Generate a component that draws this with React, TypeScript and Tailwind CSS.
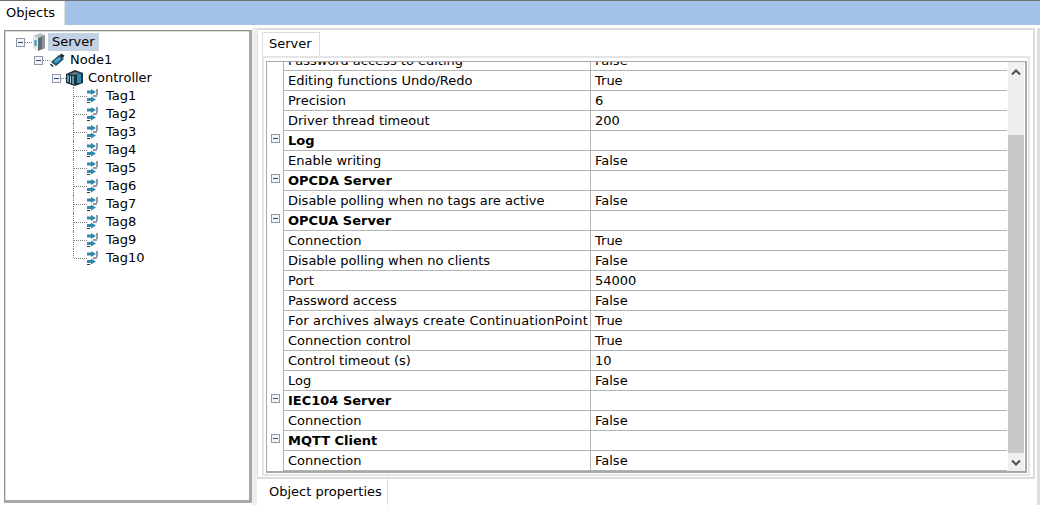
import React from "react";

const font = { fontFamily: "'DejaVu Sans', Verdana, sans-serif" };

type Row = { label: string; value?: string; head?: boolean; wide?: boolean };

const ROWS: Row[] = [
  { label: "Password access to editing", value: "False" },
  { label: "Editing functions Undo/Redo", value: "True" },
  { label: "Precision", value: "6" },
  { label: "Driver thread timeout", value: "200" },
  { label: "Log", head: true },
  { label: "Enable writing", value: "False" },
  { label: "OPCDA Server", head: true },
  { label: "Disable polling when no tags are active", value: "False" },
  { label: "OPCUA Server", head: true },
  { label: "Connection", value: "True" },
  { label: "Disable polling when no clients", value: "False" },
  { label: "Port", value: "54000" },
  { label: "Password access", value: "False" },
  { label: "For archives always create ContinuationPoint", value: "True", wide: true },
  { label: "Connection control", value: "True" },
  { label: "Control timeout (s)", value: "10" },
  { label: "Log", value: "False" },
  { label: "IEC104 Server", head: true },
  { label: "Connection", value: "False" },
  { label: "MQTT Client", head: true },
  { label: "Connection", value: "False" },
];

const TAGS = ["Tag1", "Tag2", "Tag3", "Tag4", "Tag5", "Tag6", "Tag7", "Tag8", "Tag9", "Tag10"];

function Minus() {
  return (
    <span className="flex h-[9px] w-[9px] shrink-0 items-center justify-center border border-[#8f9aa8] bg-[#f2f4f7]">
      <span className="h-px w-[5px] bg-[#2c4a80]" />
    </span>
  );
}

function ServerIcon() {
  return (
    <svg width="14" height="18" viewBox="0 0 14 18" className="shrink-0">
      <path d="M1 3 L8 0 L13 2 L6 5 Z" fill="#b8c2c4" />
      <path d="M1 3 L6 5 L6 18 L1 15 Z" fill="#e2e6e6" />
      <path d="M6 5 L13 2 L13 15 L6 18 Z" fill="#5d6d73" />
      <path d="M10 4 L13 2 L13 15 L10 16.5 Z" fill="#8a989c" />
      <rect x="2.5" y="7" width="2" height="6" fill="#2a9ac8" />
    </svg>
  );
}

function NodeIcon() {
  return (
    <svg width="15" height="14" viewBox="0 0 15 14" className="shrink-0">
      <path d="M1 9 L9 2 L14 6 L6 13 Z" fill="#1f4f68" />
      <path d="M3.5 8.5 L9 4 L11.5 6 L6 10.5 Z" fill="#46a6cf" />
      <path d="M11 0.5 L14.5 2.5 L13 5 L9.5 3 Z" fill="#20303a" />
      <path d="M0.5 11 L3 13.5" stroke="#20303a" strokeWidth="1.5" />
    </svg>
  );
}

function ControllerIcon() {
  return (
    <svg width="17" height="16" viewBox="0 0 17 16" className="shrink-0">
      <path d="M0 4 L9 0 L17 3 L17 13 L9 16 L0 13 Z" fill="#1d3340" />
      <rect x="1" y="5" width="2" height="7" fill="#5b9ab2" />
      <rect x="4" y="6" width="1" height="7" fill="#b9cdd6" />
      <rect x="6" y="6" width="2" height="8" fill="#5b9ab2" />
      <rect x="11" y="4" width="4" height="9" fill="#2a8cb8" />
      <path d="M3 4 L9 2 L14 3 L8 5 Z" fill="#6c7d86" />
    </svg>
  );
}

function TagIcon() {
  return (
    <svg width="11" height="14" viewBox="0 0 11 14" className="shrink-0">
      <path d="M0 1.5 H4 V0 L9 3 L4 6 V4.5 H0 Z" fill="#3288ae" />
      <path d="M0 9 H4 V7.5 L9 10.5 L4 13.5 V12 H0 Z" fill="#3288ae" />
      <path d="M10 0 V6 M6 7 H10" stroke="#24384a" strokeWidth="1" />
      <path d="M0 13.5 H3" stroke="#24384a" strokeWidth="1" />
    </svg>
  );
}

function Dots({ w }: { w: string }) {
  return <span className={`h-0 shrink-0 border-t border-dotted border-[#808080] ${w}`} />;
}

function TreeView() {
  return (
    <div className="flex flex-col pt-[2px] pl-[11px] text-[13px] text-black">
      <div className="flex h-[18px] items-center">
        <Minus />
        <Dots w="w-[7px]" />
        <ServerIcon />
        <span className="ml-[2px] flex h-[18px] w-[51px] items-center bg-[#c3d2e2] pl-[4px]">Server</span>
      </div>
      <div className="flex h-[18px] items-center pl-[18px]">
        <Minus />
        <Dots w="w-[7px]" />
        <NodeIcon />
        <span className="ml-[5px]">Node1</span>
      </div>
      <div className="flex h-[18px] items-center pl-[36px]">
        <Minus />
        <Dots w="w-[5px]" />
        <ControllerIcon />
        <span className="ml-[5px]">Controller</span>
      </div>
      <div className="ml-[57px] flex flex-col">
        {TAGS.map((t, i) => (
          <div key={t} className="flex h-[18px] items-center">
            <span
              className={`w-0 shrink-0 self-start border-l border-dotted border-[#808080] ${
                i === TAGS.length - 1 ? "h-[9px]" : "h-[18px]"
              }`}
            />
            <Dots w="w-[13px]" />
            <TagIcon />
            <span className="ml-[8px]">{t}</span>
          </div>
        ))}
      </div>
    </div>
  );
}

function PropRow({ row }: { row: Row }) {
  return (
    <div className="flex h-[20px] shrink-0 items-stretch">
      <div className="flex w-[16px] shrink-0 pt-[3px] pl-[4px]">{row.head && <Minus />}</div>
      <div
        className={`flex w-[307px] shrink-0 items-center overflow-hidden whitespace-nowrap border-b border-l border-[#b4b4b4] pl-[4px] ${
          row.head ? "font-bold" : ""
        } ${row.wide ? "tracking-[0.16px]" : ""}`}
      >
        {row.label}
      </div>
      <div className="flex flex-1 items-center border-b border-l border-[#b4b4b4] pl-[4px]">{row.value}</div>
    </div>
  );
}

function ScrollBar() {
  return (
    <div className="mr-px ml-px flex w-[16px] shrink-0 flex-col bg-[#efefef]">
      <div className="flex h-[20px] items-center justify-center">
        <svg width="10" height="7" viewBox="0 0 10 7">
          <path d="M1 5.5 L5 1.5 L9 5.5" fill="none" stroke="#505050" strokeWidth="2" />
        </svg>
      </div>
      <div className="h-[53px]" />
      <div className="flex-1 bg-[#c8c8c8]" />
      <div className="flex h-[18px] items-center justify-center">
        <svg width="10" height="7" viewBox="0 0 10 7">
          <path d="M1 1.5 L5 5.5 L9 1.5" fill="none" stroke="#505050" strokeWidth="2" />
        </svg>
      </div>
    </div>
  );
}

export default function App() {
  return (
    <div className="flex h-[505px] w-[1040px] flex-col overflow-hidden bg-white text-[13px] text-black" style={font}>
      <div className="flex h-[25px] shrink-0 border-t border-[#707070] bg-[#a3c2e8]">
        <div className="flex w-[65px] items-center border-r border-[#e0e0e0] bg-white pl-[6px]">Objects</div>
      </div>
      <div className="flex min-h-0 flex-1">
        <div className="flex w-[252px] shrink-0 flex-col pt-[5px] pb-[2px] pl-[4px]">
          <div className="flex-1 border-t border-r-[3px] border-b-[3px] border-l border-t-[#909090] border-r-[#a8a8a8] border-b-[#a8a8a8] border-l-[#909090] bg-white shadow-[inset_1px_1px_0_#dcdcdc]">
            <TreeView />
          </div>
        </div>
        <div className="flex min-w-0 flex-1 pt-[3px]">
          <div className="w-[5px] shrink-0 bg-[#efefef]" />
          <div className="flex min-w-0 flex-1 flex-col">
            <div className="flex h-[451px] shrink-0 flex-col border-2 border-l-1 border-[#dcdcdc] pt-[2px] pr-[3px] pb-[1px] pl-[4px]">
              <div className="flex h-[24px] w-[58px] shrink-0 items-center border-t border-r border-l border-[#dcdcdc] bg-white pb-[2px] pl-[6px]">
                Server
              </div>
              <div className="flex min-h-0 flex-1 flex-col border-2 border-[#e4e4e4] pt-[3px] pr-px pb-[1px] pl-[2px]">
                <div className="flex min-h-0 flex-1 border-t border-r-2 border-b-2 border-l border-[#a8a8a8]">
                  <div className="flex min-w-0 flex-1 flex-col overflow-hidden">
                    <div className="mt-[-11px] flex flex-col">
                      {ROWS.map((r, i) => (
                        <PropRow key={i} row={r} />
                      ))}
                    </div>
                  </div>
                  <ScrollBar />
                </div>
              </div>
            </div>
            <div className="flex min-h-0 flex-1">
              <div className="ml-px flex w-[130px] items-center border-r border-[#dcdcdc] bg-white pl-[11px]">
                Object properties
              </div>
            </div>
          </div>
          <div className="ml-[2px] w-[3px] shrink-0 bg-[#dedede]" />
        </div>
      </div>
    </div>
  );
}
